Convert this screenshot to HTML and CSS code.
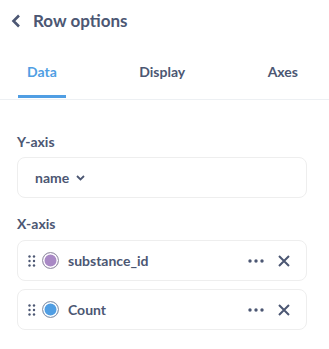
FILE: index.html
```html
<!DOCTYPE html>
<html>
<head>
<meta charset="utf-8">
<link rel="stylesheet" href="styles.css">
</head>
<body>
<div class="panel">
  <div class="header">
    <svg class="back" width="10" height="14" viewBox="0 0 10 14"><path d="M8 1.5 L2.5 7 L8 12.5" fill="none" stroke="#4C5773" stroke-width="2.6"/></svg>
    <span class="title">Row options</span>
  </div>
  <div class="tabs">
    <div class="tab active">Data</div>
    <div class="tab">Display</div>
    <div class="tab">Axes</div>
  </div>
  <div class="content">
    <div class="label">Y-axis</div>
    <div class="select">
      <span class="sel-text">name</span>
      <svg class="chev" width="9" height="6" viewBox="0 0 9 6"><path d="M1 1 L4.5 4.5 L8 1" fill="none" stroke="#4C5773" stroke-width="1.8"/></svg>
    </div>
    <div class="label label-x">X-axis</div>
    <div class="item">
      <svg class="grip" width="8" height="12" viewBox="0 0 8 12"><g fill="#4C5773"><circle cx="1.5" cy="1.5" r="1.2"/><circle cx="6" cy="1.5" r="1.2"/><circle cx="1.5" cy="6" r="1.2"/><circle cx="6" cy="6" r="1.2"/><circle cx="1.5" cy="10.5" r="1.2"/><circle cx="6" cy="10.5" r="1.2"/></g></svg>
      <span class="dot purple"></span>
      <span class="name">substance_id</span>
      <svg class="more" width="16" height="4" viewBox="0 0 16 4"><g fill="#4C5773"><circle cx="2" cy="2" r="1.7"/><circle cx="8" cy="2" r="1.7"/><circle cx="14" cy="2" r="1.7"/></g></svg>
      <svg class="close" width="12" height="12" viewBox="0 0 12 12"><path d="M1 1 L11 11 M11 1 L1 11" stroke="#4C5773" stroke-width="2"/></svg>
    </div>
    <div class="item">
      <svg class="grip" width="8" height="12" viewBox="0 0 8 12"><g fill="#4C5773"><circle cx="1.5" cy="1.5" r="1.2"/><circle cx="6" cy="1.5" r="1.2"/><circle cx="1.5" cy="6" r="1.2"/><circle cx="6" cy="6" r="1.2"/><circle cx="1.5" cy="10.5" r="1.2"/><circle cx="6" cy="10.5" r="1.2"/></g></svg>
      <span class="dot blue"></span>
      <span class="name">Count</span>
      <svg class="more" width="16" height="4" viewBox="0 0 16 4"><g fill="#4C5773"><circle cx="2" cy="2" r="1.7"/><circle cx="8" cy="2" r="1.7"/><circle cx="14" cy="2" r="1.7"/></g></svg>
      <svg class="close" width="12" height="12" viewBox="0 0 12 12"><path d="M1 1 L11 11 M11 1 L1 11" stroke="#4C5773" stroke-width="2"/></svg>
    </div>
  </div>
</div>
</body>
</html>
```

FILE: styles.css
```css
* { box-sizing: border-box; }
body {
  margin: 0;
  background: #fff;
  font-family: Lato, "Noto Sans", sans-serif;
  color: #4C5773;
}
.panel { width: 329px; }
.header {
  height: 42px;
  display: flex;
  align-items: center;
  padding-left: 11px;
}
.back { margin-right: 12px; }
.title {
  font-size: 17px;
  font-weight: 700;
  line-height: 20px;
}
.tabs {
  display: flex;
  justify-content: space-between;
  padding: 0 22px 1px 18px;
  border-bottom: 1px solid #EDF0F3;
}
.tab {
  font-size: 14px;
  font-weight: 700;
  line-height: 20px;
  padding: 20px 9px 13px;
  border-bottom: 3px solid transparent;
}
.tab.active {
  color: #509EE3;
  border-bottom-color: #509EE3;
}
.content {
  padding: 33px 22px 0 17px;
}
.label {
  font-size: 14px;
  font-weight: 700;
  line-height: 17px;
  margin-bottom: 7px;
}
.label-x { margin-top: 17px; margin-bottom: 8px; }
.select {
  height: 41px;
  border: 1px solid #EEEEEE;
  border-radius: 8px;
  display: flex;
  align-items: center;
  padding-left: 17px;
}
.sel-text {
  font-size: 14px;
  font-weight: 700;
  margin-right: 7px;
}
.chev { margin-top: 1px; }
.item {
  height: 41px;
  border: 1px solid #EEEEEE;
  border-radius: 8px;
  display: flex;
  align-items: center;
  padding-left: 10px;
  padding-right: 16px;
  margin-bottom: 8px;
}
.grip { margin-right: 6px; }
.dot {
  width: 17px;
  height: 17px;
  border-radius: 50%;
  border: 1px solid #9A9AA6;
  box-shadow: inset 0 0 0 1.5px #fff;
  margin-right: 9px;
}
.dot.purple { background: #A989C5; }
.dot.blue { background: #509EE3; }
.name {
  font-size: 14px;
  font-weight: 700;
  flex: 1;
}
.more { margin-right: 14px; }
```
